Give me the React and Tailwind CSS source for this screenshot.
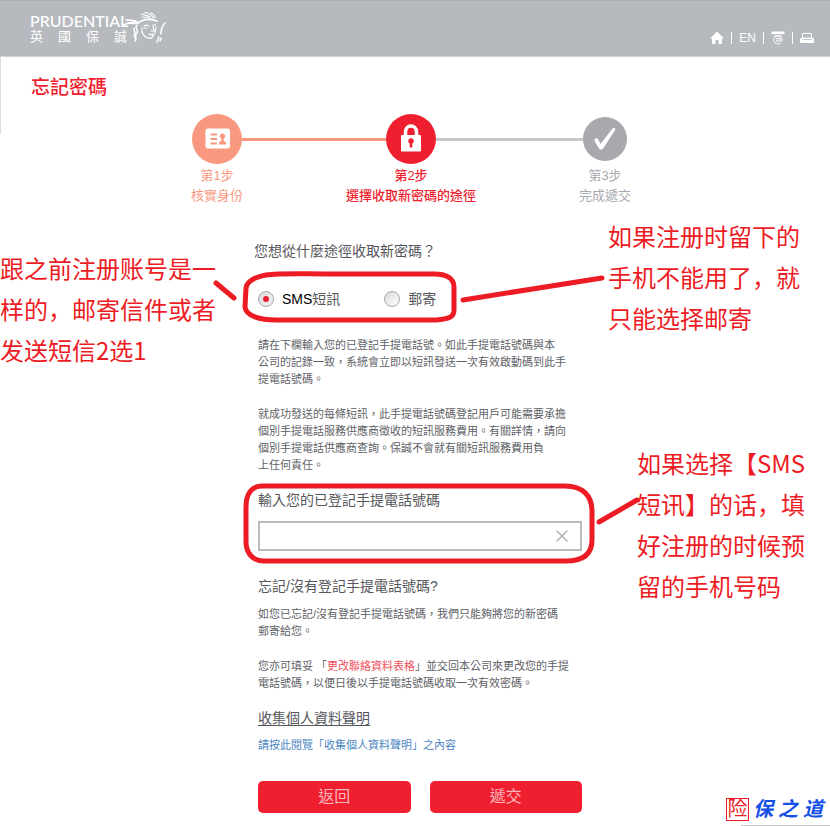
import { X } from 'lucide-react';

const steps = [
  { id: 1, title: '第1步', label: '核實身份', icon: 'card', circle: 'bg-[#f8987f]', text: 'text-[#f8987f]', left: '', right: 'bg-[#f8987f]', weight: 'font-normal' },
  { id: 2, title: '第2步', label: '選擇收取新密碼的途徑', icon: 'lock', circle: 'bg-[#ef1f2f]', text: 'text-[#ef1f2f]', left: 'bg-[#f8987f]', right: 'bg-[#c6c7ca]', weight: 'font-medium' },
  { id: 3, title: '第3步', label: '完成遞交', icon: 'check', circle: 'bg-[#a7a9ae]', text: 'text-[#a7a9ae]', left: 'bg-[#c6c7ca]', right: '', weight: 'font-normal' },
];

const StepIcon = ({ name }) => {
  if (name === 'card') {
    return (
      <svg className="w-[50px] h-[50px]" viewBox="0 0 50 50" aria-hidden="true">
        <rect x="13.5" y="14.5" width="24.5" height="20" rx="2.5" fill="#fff" />
        <path d="M18.5 20.500h6.500M18.500 25h6.500M18.500 29.500h6.500" stroke="#f8987f" strokeWidth="1.8" />
        <circle cx="30.5" cy="22" r="2.6" fill="#f8987f" />
        <path d="M29.300 23h2.400v4l2.300 1v2.400h-7V28l2.300-1z" fill="#f8987f" />
      </svg>
    );
  }
  if (name === 'lock') {
    return (
      <svg className="w-[50px] h-[50px]" viewBox="0 0 50 50" aria-hidden="true">
        <path d="M19.500 23v-5a5.500 6 0 0 1 11 0v5" fill="none" stroke="#fff" strokeWidth="3.600" />
        <rect x="15" y="21" width="20" height="16.5" rx="1" fill="#fff" />
        <circle cx="25" cy="27" r="2.7" fill="#ef1f2f" />
        <path d="M23.700 28h2.600v5.500h-2.600z" fill="#ef1f2f" />
      </svg>
    );
  }
  return (
    <svg className="w-[44px] h-[44px]" viewBox="0 0 44 44" aria-hidden="true">
      <path d="M11.500 22.500c1.500-2 3.500-1.500 4.300 1l1.700 3.500L29.500 11.500c1.500-1.500 3.500-.3 2.600 1.600L20.500 31c-1.300 2-3.600 2-4.800 0l-4-6.500z" fill="#fff" />
    </svg>
  );
};

const Logo = () => (
  <a href="#home" className="flex items-start text-white" aria-label="PRUDENTIAL 英國保誠">
    <span className="flex w-[97px] flex-col">
      <span className="font-['Lato',sans-serif] text-base leading-[18px] font-medium">PRUDENTIAL</span>
      <span className="flex justify-between text-[13px] leading-[14px]">
        <span>英</span>
        <span>國</span>
        <span>保</span>
        <span>誠</span>
      </span>
    </span>
    <svg className="-ml-1 h-[36px] w-[44px]" viewBox="1 4 44 36" fill="none" stroke="#fff" strokeWidth="1.2" strokeLinecap="round" aria-hidden="true">
      <path d="M4 12c3 0 6 0 10 1M1 17c4-1 8-4 14-3" strokeWidth="1.500" />
      <path d="M6 15c4 0 8 1 10 0 5-4 11-5 19-2" strokeWidth="1.800" />
      <path d="M19 6c4 1 6 1 9 3M22 4c4 1 8 3 9 6M29 5c2 1 4 3 4 5M20 9c4 0 6 0 9 2" />
      <path d="M15 17c-3 3 2 5 0 8-2 2-3 4-1 7M12 20c-1 3 3 4 0 8M14 29l-1 4" strokeWidth="1.500" />
      <path d="M20 20c-1 5 2 9 6 10 3 1 5-1 6-4" />
      <path d="M22 18c1-1 3-1 5 0M22 20h3M31 17h3M31 18l1 5h-3M27 26c1 1 3 1 4 0M34 19l-1 6" />
      <path d="M43 15c-3 3-4 6-4 11" strokeWidth="1.600" />
      <path d="M37 29l-2 5M39 30l-1 3" strokeWidth="1.500" />
    </svg>
  </a>
);

const Header = () => (
  <header className="flex h-[57px] items-start justify-between border-t border-b border-t-[#a9acb1] border-b-[#cfd1d3] bg-[#b6b9be] pr-4 pl-[30px]">
    <div className="pt-[11px]">
      <Logo />
    </div>
    <nav className="flex items-center gap-[7px] pt-7 text-xs leading-[18px] text-white">
      <a href="#home" aria-label="主頁">
        <svg className="h-[14px] w-[14px]" viewBox="0 0 14 14" fill="#fff" aria-hidden="true">
          <path d="M7 .5 0 7.500h2V13h3.500V9h3v4H12V7.500h2z" />
        </svg>
      </a>
      <span className="h-3 w-px bg-white" />
      <a href="#en">EN</a>
      <span className="h-3 w-px bg-white" />
      <a href="#contact" aria-label="聯絡我們">
        <svg className="h-[14px] w-[14px]" viewBox="0 0 14 14" fill="none" stroke="#fff" aria-hidden="true">
          <path d="M.5 1.800h13" strokeWidth="2.600" />
          <path d="M3 5h8" />
          <path d="M9.500 12.200a4.200 4.200 0 1 1 1.700-3.500c0 1.800-2.200 2-2.200.3V7" />
          <circle cx="7" cy="8.800" r="1.700" />
        </svg>
      </a>
      <span className="h-3 w-px bg-white" />
      <a href="#print" aria-label="列印">
        <svg className="h-[14px] w-[14px]" viewBox="0 0 14 14" aria-hidden="true">
          <path d="M2.500 7V2.500h9V7" fill="none" stroke="#fff" />
          <path d="M1.500 6.500h11L14 8v4H0V8z" fill="#fff" />
          <path d="M2 8.500h10" stroke="#b6b9be" strokeWidth=".7" />
        </svg>
      </a>
    </nav>
  </header>
);

const Steps = () => (
  <ol className="mx-auto grid w-full max-w-[590px] grid-cols-3 pr-2">
    {steps.map((step) => (
      <li key={step.id} className={`flex flex-col items-center text-[13px] leading-5 ${step.text} ${step.weight}`}>
        <div className="mb-[2px] flex h-[50px] w-full items-center">
          <span className={`h-[3px] flex-1 ${step.left}`} />
          <span className={`overflow-hidden rounded-full ${step.circle}`}>
            <StepIcon name={step.icon} />
          </span>
          <span className={`h-[3px] flex-1 ${step.right}`} />
        </div>
        <span>{step.title}</span>
        <span>{step.label}</span>
      </li>
    ))}
  </ol>
);

const radioClass =
  "relative h-4 w-4 appearance-none rounded-full border border-[#a5a7ab] bg-linear-to-br from-[#d8dadd] to-white checked:to-[#f4f4f4] checked:before:absolute checked:before:inset-1 checked:before:rounded-full checked:before:bg-[#ef1f2f] checked:before:content-['']";

const ResetForm = () => (
  <form className="mx-auto mt-[35px] w-full max-w-[334px] pl-[10px] text-[11px] leading-[17px] text-[#606166]" onSubmit={(e) => e.preventDefault()}>
    <fieldset>
      <legend className="-ml-1 text-sm leading-5 text-[#55565a]">您想從什麼途徑收取新密碼？</legend>
      <div className="mt-7 flex gap-11 text-sm leading-5 text-[#55565a]">
        <label className="flex items-center gap-2">
          <input type="radio" name="channel" value="sms" defaultChecked className={radioClass} />
          <span>
            <span className="text-black">SMS</span>短訊
          </span>
        </label>
        <label className="flex items-center gap-2">
          <input type="radio" name="channel" value="mail" className={radioClass} />
          郵寄
        </label>
      </div>
    </fieldset>

    <p className="mt-7">
      請在下欄輸入您的已登記手提電話號。如此手提電話號碼與本
      <br />
      公司的記錄一致，系統會立即以短訊發送一次有效啟動碼到此手
      <br />
      提電話號碼。
    </p>
    <p className="mt-[18px]">
      就成功發送的每條短訊，此手提電話號碼登記用戶可能需要承擔
      <br />
      個別手提電話服務供應商徵收的短訊服務費用。有關詳情，請向
      <br />
      個別手提電話供應商查詢。保誠不會就有關短訊服務費用負
      <br />
      上任何責任。
    </p>

    <label htmlFor="mobile" className="mt-4 block text-sm leading-5 text-[#55565a]">
      輸入您的已登記手提電話號碼
    </label>
    <div className="mt-[11px] flex h-[30px] items-center border-2 border-[#b9bbc0] bg-white pr-2">
      <input id="mobile" type="tel" className="h-full min-w-0 flex-1 px-2 text-sm outline-none" />
      <button type="button" aria-label="清除">
        <X className="h-[20px] w-[20px] text-[#a7a9ae]" strokeWidth={1.5} />
      </button>
    </div>

    <h2 className="mt-[25px] text-sm leading-5 text-[#55565a]">忘記/沒有登記手提電話號碼?</h2>
    <p className="mt-[10px]">
      如您已忘記/沒有登記手提電話號碼，我們只能夠將您的新密碼
      <br />
      郵寄給您。
    </p>
    <p className="mt-[18px]">
      您亦可填妥 「
      <a href="#form" className="text-[#f0505c]">
        更改聯絡資料表格
      </a>
      」並交回本公司來更改您的手提
      <br />
      電話號碼，以便日後以手提電話號碼收取一次有效密碼。
    </p>

    <h2 className="mt-4 text-sm leading-5 text-[#55565a] underline underline-offset-2">收集個人資料聲明</h2>
    <a href="#statement" className="mt-[9px] block text-[#4a86c0]">
      請按此閱覽「收集個人資料聲明」之內容
    </a>

    <div className="mt-[27px] grid grid-cols-2 gap-[19px] text-base text-[#fbb7bb]">
      <button type="button" className="h-8 rounded-[5px] bg-[#ef1f2f]">
        返回
      </button>
      <button type="submit" className="h-8 rounded-[5px] bg-[#ef1f2f]">
        遞交
      </button>
    </div>
  </form>
);

const noteClass = "absolute text-2xl leading-[41px] whitespace-nowrap text-[#ed1c24] font-['Noto_Sans_CJK_SC',sans-serif]";

const Annotations = () => (
  <div lang="zh-Hans">
    <svg className="pointer-events-none absolute top-0 left-0 h-[826px] w-[830px]" viewBox="0 0 830 826" fill="none" stroke="#ed1c24" strokeWidth="5" strokeLinecap="round" strokeLinejoin="round" aria-hidden="true">
      <path d="M246 288c1-7 9-11 20-13 15-2 35-1 65-1h103c12 0 20 4 20 13v23c0 7-5 9-18 10H276c-16 0-30-4-31-13z" />
      <path d="M216 283l18 15M463 300l139-22M599 522l38-22" />
      <path d="M262 486h303c18 0 27 10 27 25v29c0 15-10 21-26 21H264c-12 0-18-9-18-19v-35c0-12 5-21 16-21z" />
    </svg>
    <p className={`${noteClass} top-[247px] left-0`}>
      跟之前注册账号是一
      <br />
      样的，邮寄信件或者
      <br />
      发送短信2选1
    </p>
    <p className={`${noteClass} top-[215px] left-[608px]`}>
      如果注册时留下的
      <br />
      手机不能用了，就
      <br />
      只能选择邮寄
    </p>
    <p className={`${noteClass} top-[442px] left-[637px]`}>
      如果选择【SMS
      <br />
      短讯】的话，填
      <br />
      好注册的时候预
      <br />
      留的手机号码
    </p>
    <div className="absolute right-0 bottom-0 flex w-[104px] items-center gap-1 pb-[5px] text-[20px] leading-[24px] text-[#1450e6] italic">
      <span className="h-[23px] w-[23px] border border-[#ed1c24] text-center leading-[21px] text-[#ed1c24] not-italic">险</span>
      <span className="flex w-[70px] justify-between font-bold">
        <span>保</span>
        <span>之</span>
        <span>道</span>
      </span>
      <span className="absolute right-0 bottom-0 h-px w-[89px] bg-[#c9c9c9]" />
    </div>
  </div>
);

export default function App() {
  return (
    <div className="min-h-screen bg-white font-['Liberation_Sans','Noto_Sans_CJK_TC',sans-serif]" lang="zh-Hant">
      <div className="relative mx-auto w-full max-w-[830px] pb-[13px]">
        <Header />
        <main>
          <h1 className="border-l border-[#dcdddf] pt-[19px] pb-[34px] pl-[30px] text-[19px] leading-6 font-medium text-[#ef1f2f]">忘記密碼</h1>
          <div className="-mt-5">
            <Steps />
          </div>
          <ResetForm />
        </main>
        <Annotations />
      </div>
    </div>
  );
}
